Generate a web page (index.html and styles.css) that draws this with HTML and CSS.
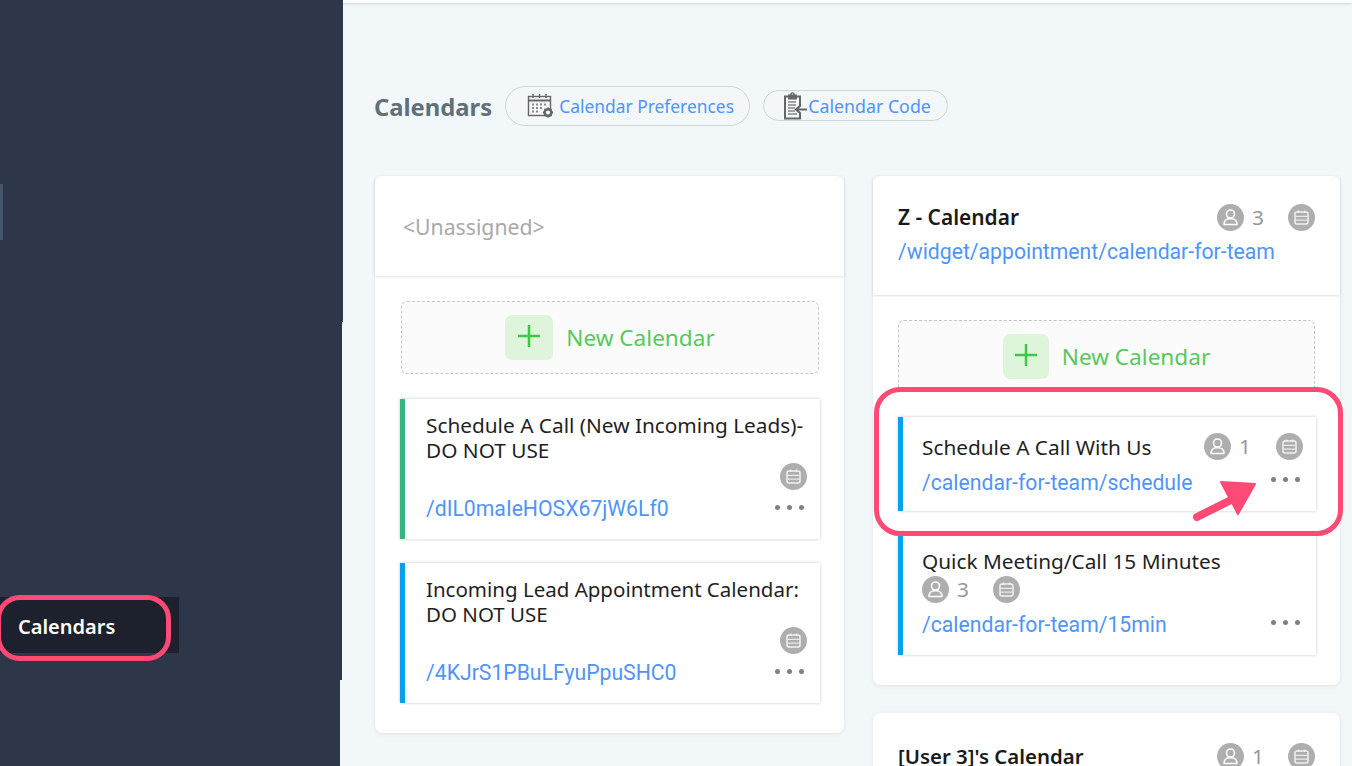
FILE: index.html
```html
<!DOCTYPE html>
<html lang="en">
<head>
<meta charset="utf-8">
<title>Calendars</title>
<link rel="stylesheet" href="styles.css">
</head>
<body>
<svg class="defs" width="0" height="0" aria-hidden="true">
  <symbol id="person" viewBox="0 0 27 27">
    <circle cx="13.5" cy="13.5" r="13.5" fill="#aeaeae"/>
    <circle cx="13.5" cy="10" r="4" fill="none" stroke="#fff" stroke-width="1.600"/>
    <path d="M7 20.500c0-3.500 2.500-5.500 4.500-5.800h4c2 .3 4.500 2.300 4.500 5.800z" fill="none" stroke="#fff" stroke-width="1.600" stroke-linejoin="round"/>
  </symbol>
  <symbol id="cal" viewBox="0 0 27 27">
    <circle cx="13.500" cy="13.500" r="13.500" fill="#aeaeae"/>
    <rect x="7" y="8" width="13" height="12" rx="2" fill="none" stroke="#f1f1f1" stroke-width="1.500"/>
    <path d="M7 12.300h13M7 16.200h13" stroke="#e9e9e9" stroke-width="1.300"/>
    <path d="M10.500 6.500v2.500M16.500 6.500v2.500" stroke="#f1f1f1" stroke-width="1.500"/>
  </symbol>
  <symbol id="plus" viewBox="0 0 24 24">
    <path d="M12 1v22M1 12h22" stroke="#3ec944" stroke-width="2.500" fill="none"/>
  </symbol>
</svg>
<div class="app">
  <aside class="sidebar">
    <div class="stripe"></div>
    <div class="nav-item">
      <span>Calendars</span>
      <div class="nav-ring"></div>
    </div>
    <div class="edge edge-a"></div>
    <div class="edge edge-b"></div>
  </aside>
  <main class="main">
    <div class="topbar"></div>
    <div class="toolbar">
      <h1 class="page-title">Calendars</h1>
      <a class="pill pill-a">
        <svg class="tool-icon" width="28" height="26" viewBox="0 0 28 26" fill="none" stroke="#666">
          <rect x="1.500" y="3.500" width="22" height="19" stroke-width="1.400"/>
          <path d="M1.500 7.500h22" stroke-width="2"/>
          <path d="M6 1v4M12.500 1v4M19 1v4" stroke-width="1.400"/>
          <path d="M5 11.500h2M9 11.500h2M13 11.500h2M17 11.500h2M5 15h2M9 15h2M13 15h2M5 18.500h2M9 18.500h2" stroke="#888" stroke-width="2"/>
          <circle cx="21" cy="19.500" r="3.300" fill="#f2f7fa" stroke-width="2.400"/>
          <path d="M21 14.500v2M21 22.500v2M16 19.500h2M24 19.500h2M17.500 16l1.400 1.400M23.100 21.600l1.400 1.400M17.500 23l1.400-1.400M23.100 17.400l1.400-1.400" stroke-width="1.800"/>
        </svg>
        <span>Calendar Preferences</span>
      </a>
      <a class="pill pill-b">
        <svg class="tool-icon" width="24" height="28" viewBox="0 0 24 28" fill="none" stroke="#666">
          <path d="M17 14V4.500H2V26.500H17V21" stroke-width="2"/>
          <rect x="5.500" y="3" width="8" height="4" fill="#666" stroke-width="1"/>
          <circle cx="9.500" cy="2.500" r="1.600" stroke-width="1.400"/>
          <path d="M5 10h8M5 13h8M5 16h7M5 19h7M5 22h9" stroke="#888" stroke-width="1.500"/>
          <path d="M24 17.500H13M17.500 13.500l-4.500 4 4.500 4" stroke-width="2.200"/>
        </svg>
        <span>Calendar Code</span>
      </a>
    </div>
    <div class="board">
      <div class="col">
        <section class="card">
          <header class="card-head card-head-plain">
            <span class="unassigned">&lt;Unassigned&gt;</span>
          </header>
          <div class="card-body">
            <button class="new-cal"><span class="plus"><svg class="plus-ico"><use href="#plus"/></svg></span><span>New Calendar</span></button>
            <article class="item item-green item-tall">
              <div class="item-title">Schedule A Call (New Incoming Leads)-DO NOT USE</div>
              <div class="meta meta-end"><svg class="ico"><use href="#cal"/></svg></div>
              <div class="item-foot"><a class="link">/dIL0maIeHOSX67jW6Lf0</a><span class="dots"><i></i><i></i><i></i></span></div>
            </article>
            <article class="item item-blue item-tall">
              <div class="item-title item-title-tight">Incoming Lead Appointment Calendar: DO NOT USE</div>
              <div class="meta meta-end"><svg class="ico"><use href="#cal"/></svg></div>
              <div class="item-foot"><a class="link">/4KJrS1PBuLFyuPpuSHC0</a><span class="dots"><i></i><i></i><i></i></span></div>
            </article>
          </div>
        </section>
      </div>
      <div class="col">
        <section class="card">
          <header class="card-head">
            <div class="head-row">
              <strong class="card-name">Z - Calendar</strong>
              <div class="meta"><svg class="ico"><use href="#person"/></svg><span class="count">3</span><svg class="ico ico-gap"><use href="#cal"/></svg></div>
            </div>
            <a class="link">/widget/appointment/calendar-for-team</a>
          </header>
          <div class="card-body">
            <button class="new-cal new-cal-r"><span class="plus"><svg class="plus-ico"><use href="#plus"/></svg></span><span>New Calendar</span></button>
            <div class="hl-wrap">
              <div class="hl-ring"></div>
              <article class="item item-blue item-short">
                <div class="head-row">
                  <div class="item-title">Schedule A Call With Us</div>
                  <div class="meta"><svg class="ico"><use href="#person"/></svg><span class="count">1</span><svg class="ico ico-gap"><use href="#cal"/></svg></div>
                </div>
                <div class="item-foot"><a class="link">/calendar-for-team/schedule</a><span class="dots"><i></i><i></i><i></i></span></div>
              </article>
              <svg class="arrow" width="70" height="42" viewBox="0 0 70 42" fill="none">
                <path d="M4 36L42 17" stroke="#ff4a75" stroke-width="8" stroke-linecap="round"/>
                <path d="M62 3L28 1L45 33z" fill="#ff4a75" stroke="#ff4a75" stroke-width="2" stroke-linejoin="round"/>
              </svg>
            </div>
            <article class="item item-blue item-mid">
              <div class="item-title">Quick Meeting/Call 15 Minutes</div>
              <div class="meta meta-start"><svg class="ico"><use href="#person"/></svg><span class="count">3</span><svg class="ico ico-gap"><use href="#cal"/></svg></div>
              <div class="item-foot"><a class="link">/calendar-for-team/15min</a><span class="dots"><i></i><i></i><i></i></span></div>
            </article>
          </div>
        </section>
        <section class="card card-last">
          <header class="card-head">
            <div class="head-row">
              <strong class="card-name">[User 3]'s Calendar</strong>
              <div class="meta"><svg class="ico"><use href="#person"/></svg><span class="count">1</span><svg class="ico ico-gap"><use href="#cal"/></svg></div>
            </div>
          </header>
        </section>
      </div>
    </div>
  </main>
</div>
</body>
</html>
```
FILE: styles.css
```css
* { box-sizing: border-box; }
html, body { margin: 0; height: 100%; }
body {
  height: 766px;
  overflow: hidden;
  background: #f2f7fa;
  font-family: "Noto Sans", "Open Sans", sans-serif;
  color: #1a1a1a;
}
.defs { position: absolute; }
.app { display: flex; height: 766px; overflow: hidden; }

/* Sidebar */
.sidebar {
  position: relative;
  flex: 0 0 343px;
  background: #2e3749;
  display: flex;
  flex-direction: column;
  align-items: flex-start;
  padding-top: 184px;
}
.stripe { width: 3px; height: 56px; background: #47556b; }
.nav-item {
  position: relative;
  margin-top: 357px;
  width: 179px;
  height: 56px;
  background: #1c212d;
  color: #fff;
  font-weight: 600;
  font-size: 20px;
  line-height: 60px;
  padding-left: 18px;
}
.nav-ring {
  position: absolute;
  left: -4px;
  top: -2px;
  width: 175px;
  height: 66px;
  border: 5px solid #ff4a75;
  border-radius: 24px;
}
.edge { position: absolute; right: 0; background: #f2f7fa; }
.edge-a { top: 322px; height: 358px; width: 1px; }
.edge-b { top: 680px; bottom: 0; width: 3px; }

/* Main */
.main { flex: 1; min-width: 0; display: flex; flex-direction: column; }
.topbar { height: 3px; background: #fff; box-shadow: 0 1px 3px rgba(0,0,0,.14); flex: none; }
.toolbar {
  display: flex;
  align-items: center;
  height: 44px;
  margin: 82px 0 0 31px;
  flex: none;
}
.page-title { margin: 0; font-size: 23.800px; font-weight: 700; color: #606f7b; line-height: 44px; }
.pill {
  display: flex;
  align-items: center;
  border: 1px solid #d0d5d8;
  background: #f3f7fa;
  color: #4f94f7;
  font-size: 17.400px;
  margin-top: -3px;
}
.pill-a { margin-left: 13px; height: 40px; width: 245px; border-radius: 20px; padding-left: 21px; gap: 4px; }
.pill-b { margin-left: 13px; height: 31px; width: 185px; border-radius: 16px; padding-left: 19px; gap: 1px; font-size: 17.800px; }
.tool-icon { flex: none; }

.board {
  display: grid;
  grid-template-columns: 469px 467px;
  column-gap: 29px;
  margin: 47px 0 0 32px;
  align-items: start;
}
.col { display: flex; flex-direction: column; gap: 27px; }
.card {
  background: #fff;
  border-radius: 8px;
  box-shadow: 0 1px 4px rgba(0,0,0,.09);
}
.card-head {
  padding: 26px 25px 0;
  height: 119px;
  box-shadow: 0 1px 2px rgba(0,0,0,.12);
  display: flex;
  flex-direction: column;
  gap: 6px;
}
.card-head-plain { height: 100px; padding: 0 28px; justify-content: center; }
.unassigned { font-size: 21.200px; color: #a9a9a9; }
.card-name { font-size: 20.900px; font-weight: 600; color: #1a1a1a; line-height: 30px; }
.head-row { display: flex; justify-content: space-between; align-items: center; }
.card-body { padding: 25px 25px 30px; display: flex; flex-direction: column; }
.card-last .card-head { box-shadow: none; padding-top: 28px; }
.card-last .card-name { font-size: 20.400px; }
.card-last { margin-top: 1px; }

.new-cal {
  display: flex;
  align-items: center;
  justify-content: center;
  gap: 13px;
  height: 73px;
  width: 418px;
  margin-left: 1px;
  background: #fbfbfb;
  border: 1px dashed #c6c6c6;
  border-radius: 6px;
  color: #56c95c;
  font-family: inherit;
  font-size: 22.600px;
  margin-bottom: 25px;
  padding: 0;
}
.new-cal-r { margin-left: 0; margin-bottom: 24px; width: 417px; gap: 13px; }
.plus {
  display: flex;
  align-items: center;
  justify-content: center;
  width: 48px;
  height: 45px;
  border-radius: 7px;
  background: #def5dc;
  padding-bottom: 4px;
}
.plus-ico { width: 24px; height: 24px; }
.new-cal-r .plus { width: 46px; }

.item {
  position: relative;
  background: #fff;
  box-shadow: 0 0 3px rgba(0,0,0,.22);
  padding: 0 13px 0 21px;
  border-left: 5px solid #06a0ec;
}
.item-green { border-left-color: #36b37e; }
.item-blue { border-left-color: #06a0ec; }
.item-title { font-size: 20.800px; line-height: 25px; color: #1f1f1f; }
.item-title-tight { font-size: 20.500px; }
.item-tall { width: 420px; height: 140px; padding-top: 14px; margin-bottom: 24px; }
.item-tall:last-child { margin-bottom: 0; }
.item-tall .meta-end { margin-top: 0; }
.item-tall .item-foot { margin-top: 5px; }
.item-tall .dots { margin-bottom: 4px; }
.item-short { width: 418px; height: 94px; padding-top: 16px; padding-left: 19px; }
.item-mid { width: 418px; height: 121px; padding-top: 15px; padding-left: 19px; margin-top: 23px; }
.item-mid .item-foot { margin-top: 8px; }
.item-short .item-title { margin-top: 2px; }
.item-short .item-foot { margin-top: 9px; }
.item-short .dots { margin-bottom: 7px; }
.item-short .ico-gap { margin-left: 25px; }

.meta { display: flex; align-items: center; }
.meta-end { justify-content: flex-end; height: 27px; margin-top: 2px; }
.meta-start { margin-top: 2px; height: 27px; }
.ico { width: 27px; height: 27px; flex: none; }
.count { font-size: 20.800px; color: #979797; margin-left: 8px; width: 12px; line-height: 27px; }
.ico-gap { margin-left: 24px; }
.item-foot { display: flex; justify-content: space-between; align-items: center; margin-top: 5px; }
.link {
  font-family: Roboto, sans-serif;
  font-size: 21.200px;
  line-height: 28px;
  color: #4f94f7;
}
.dots { display: flex; gap: 7px; margin: 0 3px 5px 0; }
.dots i { width: 5px; height: 5px; border-radius: 50%; background: #808080; }

/* Annotation */
.hl-wrap { position: relative; z-index: 1; }
.hl-ring {
  position: absolute;
  left: -24px;
  right: -28px;
  top: -30px;
  bottom: -25px;
  background: #fff;
  border: 5px solid #ff4a75;
  border-radius: 26px;
}
.arrow { position: absolute; left: 295px; top: 64px; }
```
